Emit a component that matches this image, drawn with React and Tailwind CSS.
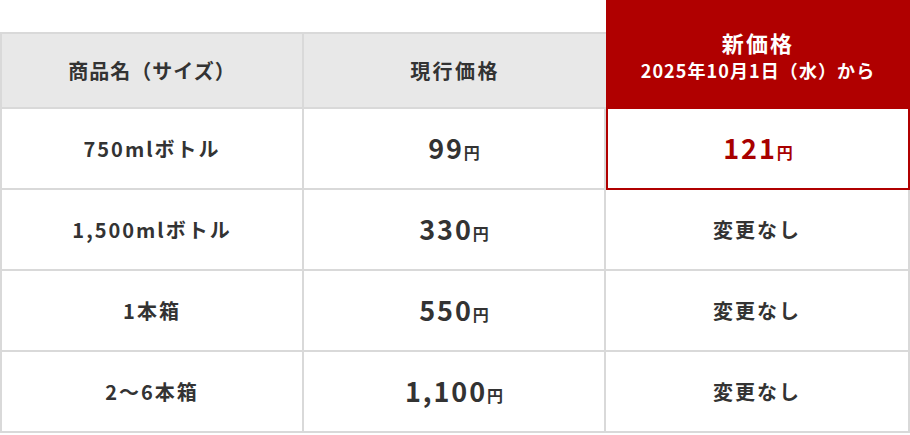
const rows = [
  { name: "750mlボトル", price: "99", next: "121" },
  { name: "1,500mlボトル", price: "330", next: null },
  { name: "1本箱", price: "550", next: null },
  { name: "2〜6本箱", price: "1,100", next: null }
];

const font = { fontFamily: '"Noto Sans CJK JP", "Noto Sans", sans-serif' };

const Yen = ({ value, red }) => (
  <span className={`font-semibold ${red ? "text-[#a80000]" : "text-[#333]"}`}>
    <span className="text-[27px] tracking-[0.07em]">{value}</span>
    <span className="text-[16px]">円</span>
  </span>
);

export default function App() {
  return (
    <div className="h-[435px] w-[910px] overflow-hidden bg-white text-[#333]" style={font}>
      <div className="flex h-[109px] items-end">
        <div className="grid h-[77px] w-[606px] grid-cols-[302px_302px] border-t-2 border-b-2 border-l-2 border-[#d9d9d9] bg-[#e8e8e8]">
          <div className="flex items-center justify-center border-r-2 border-[#d9d9d9] text-[20px] font-bold tracking-[0.05em]">
            商品名（サイズ）
          </div>
          <div className="flex items-center justify-center text-[20px] font-bold tracking-[0.12em]">
            現行価格
          </div>
        </div>
        <div className="flex h-[109px] flex-1 flex-col items-center justify-center bg-[#b00000] text-white">
          <p className="text-[22px] font-bold leading-[30px] tracking-[0.1em]">新価格</p>
          <p className="text-[18px] font-semibold leading-[26px] tracking-[0.06em]">2025年10月1日（水）から</p>
        </div>
      </div>
      <div className="grid grid-cols-[302px_302px_304px] border-l-2 border-[#d9d9d9]">
        {rows.map((row) => (
          <div key={row.name} className="contents">
            <div className="flex h-[81px] items-center justify-center border-r-2 border-b-2 border-[#d9d9d9] text-[20px] font-semibold tracking-[0.1em]">
              {row.name}
            </div>
            <div className="flex h-[81px] items-center justify-center border-r-2 border-b-2 border-[#d9d9d9]">
              <Yen value={row.price} />
            </div>
            {row.next ? (
              <div className="flex h-[81px] items-center justify-center border-2 border-t-0 border-[#b00000]">
                <Yen value={row.next} red />
              </div>
            ) : (
              <div className="flex h-[81px] items-center justify-center border-r-2 border-b-2 border-[#d9d9d9] text-[20px] font-semibold tracking-[0.1em]">
                変更なし
              </div>
            )}
          </div>
        ))}
      </div>
    </div>
  );
}
